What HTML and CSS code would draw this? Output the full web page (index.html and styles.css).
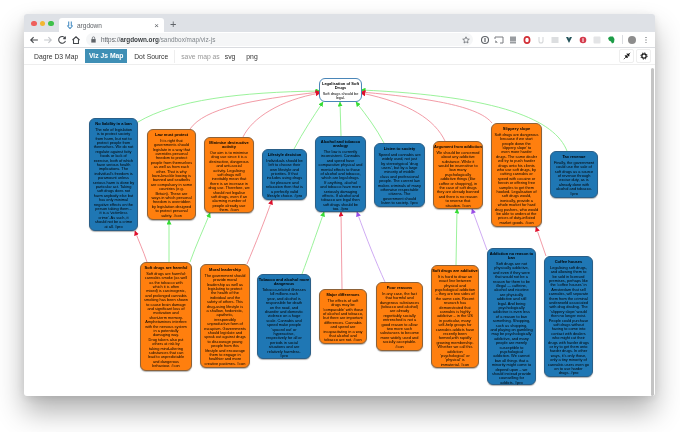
FILE: index.html
```html
<!DOCTYPE html>
<html lang="en">
<head>
  <meta charset="UTF-8" />
  <title>argdown</title>
  <link rel="stylesheet" href="styles.css">
</head>
<body>
  <div class="window">

    <!-- Tab strip -->
    <div class="tabstrip">
      <span class="light light-red"></span>
      <span class="light light-amber"></span>
      <span class="light light-green"></span>
      <div class="tab">
        <svg class="favicon" viewBox="0 0 8 8"><path d="M2.7 0.5V5M5.3 0.5V5M1.2 4.5L4 7.6L6.8 4.5" fill="none" stroke="#4a8fc4" stroke-width="1.1"/></svg>
        <span class="tab-title">argdown</span>
        <span class="tab-close">×</span>
      </div>
      <span class="tab-new">+</span>
    </div>

    <!-- Browser toolbar -->
    <div class="toolbar">
      <svg class="slot" viewBox="-2 -2 18 18"><path d="M12 7H3M6.5 3.2L2.8 7L6.5 10.8" fill="none" stroke="#44474b" stroke-width="1.4"/></svg>
      <svg class="slot" viewBox="-2 -2 18 18"><path d="M2 7H11M7.5 3.2L11.2 7L7.5 10.8" fill="none" stroke="#c4c7cb" stroke-width="1.4"/></svg>
      <svg class="slot" viewBox="-2 -2 18 18"><path d="M11 4.7A4.4 4.4 0 1 0 11.4 8M11.3 2.5V5.2H8.6" fill="none" stroke="#44474b" stroke-width="1.4"/></svg>
      <svg class="slot" viewBox="-2 -2 18 18"><path d="M2.5 7L7 2.8L11.5 7M3.8 6V11.5H10.2V6" fill="none" stroke="#44474b" stroke-width="1.4"/></svg>
      <div class="omnibox">
        <svg class="lock" viewBox="0 0 8 8"><rect x="1.5" y="3.5" width="5" height="4" fill="#5f6368"/><path d="M2.6 3.5V2.3A1.4 1.4 0 0 1 5.4 2.3V3.5" fill="none" stroke="#5f6368" stroke-width="0.8"/></svg>
        <span class="url"><span class="url-scheme">https://</span><span class="url-host">argdown.org</span><span class="url-path">/sandbox/map/viz-js</span></span>
        <svg class="star" viewBox="0 0 10 10"><path d="M5 1L6.2 3.7L9.1 4L6.9 5.9L7.5 8.8L5 7.3L2.5 8.8L3.1 5.9L0.9 4L3.8 3.7Z" fill="none" stroke="#5f6368" stroke-width="0.9"/></svg>
      </div>
      <svg class="slot" viewBox="0 0 14 14"><circle cx="7" cy="7" r="3.5" fill="none" stroke="#5f6368" stroke-width="1.1"/><path d="M7 5V9" stroke="#5f6368" stroke-width="1.2"/></svg>
      <svg class="slot" viewBox="0 0 14 14"><path d="M3 6V4H11V10H8M3 8A2 2 0 0 1 5 10M3 9.5H3.6" fill="none" stroke="#7a7d81" stroke-width="1"/></svg>
      <svg class="slot" viewBox="0 0 14 14"><rect x="4" y="3.5" width="6" height="7" fill="#9a9da1"/><path d="M4 8.5H10" stroke="#e4e5e7" stroke-width="0.6"/></svg>
      <svg class="slot" viewBox="0 0 14 14"><ellipse cx="7" cy="7" rx="2.6" ry="3.2" fill="none" stroke="#d22f36" stroke-width="1.7"/></svg>
      <svg class="slot" viewBox="0 0 14 14"><path d="M5 4V8A2 2 0 0 0 9 8V4" fill="none" stroke="#d6d8da" stroke-width="1.1"/></svg>
      <svg class="slot" viewBox="0 0 14 14"><rect x="3.5" y="4" width="7" height="6" fill="#dcdee0"/></svg>
      <svg class="slot" viewBox="0 0 14 14"><path d="M4 4H6.2L7 5.8L7.8 4H10L7 10Z" fill="#26555c"/></svg>
      <svg class="slot" viewBox="0 0 14 14"><circle cx="7" cy="7" r="3.3" fill="#d43a4c"/><path d="M7 5.2V9" stroke="#fff" stroke-width="1"/></svg>
      <svg class="slot" viewBox="0 0 14 14"><rect x="3.5" y="3.5" width="7" height="7" rx="1" fill="#e3e4e6"/></svg>
      <svg class="slot" viewBox="0 0 14 14"><path d="M4 5L6 3.5H9L10.5 6L10 9.5L8 10.5L7 8.5L5 7.5Z" fill="#1c9c47"/></svg>
      <span class="toolbar-sep"></span>
      <span class="avatar-slot"><span class="avatar"></span></span>
      <svg class="slot" viewBox="0 0 14 14"><path d="M7 4V4.9M7 6.6V7.5M7 9.2V10.1" stroke="#5f6368" stroke-width="1.1"/></svg>
    </div>

    <!-- App nav -->
    <nav class="appnav">
      <a class="nav-link">Dagre D3 Map</a>
      <a class="nav-link active">Viz Js Map</a>
      <a class="nav-link">Dot Source</a>
      <span class="nav-sep"></span>
      <span class="nav-label">save map as</span>
      <a class="nav-link nav-svg">svg</a>
      <a class="nav-link nav-png">png</a>
      <span class="nav-tools">
        <span class="tool-btn">
          <svg viewBox="0 0 10 10"><path d="M1 9L4 6M9 1L6 4M2.5 4.7H5.3V7.5ZM4.7 2.5H7.5V5.3Z" fill="#111" stroke="#111" stroke-width="0.9"/></svg>
        </span>
        <span class="tool-btn">
          <svg viewBox="0 0 10 10"><circle cx="5" cy="5" r="2.7" fill="none" stroke="#111" stroke-width="1.5"/><circle cx="5" cy="5" r="3.9" fill="none" stroke="#111" stroke-width="1.2" stroke-dasharray="1.5 1.56"/></svg>
        </span>
      </span>
    </nav>

    <!-- Map -->
    <div class="map">
      <svg class="edges" viewBox="24 65 631 332">
        <defs>
          <marker id="head-green" markerUnits="userSpaceOnUse" markerWidth="5" markerHeight="5" refX="4.5" refY="2.5" orient="auto"><path d="M0 0L5 2.5L0 5Z" fill="#35dd35"/></marker>
          <marker id="head-red" markerUnits="userSpaceOnUse" markerWidth="5" markerHeight="5" refX="4.5" refY="2.5" orient="auto"><path d="M0 0L5 2.5L0 5Z" fill="#e0102c"/></marker>
          <marker id="head-purple" markerUnits="userSpaceOnUse" markerWidth="5" markerHeight="5" refX="4.5" refY="2.5" orient="auto"><path d="M0 0L5 2.5L0 5Z" fill="#9a4de6"/></marker>
        </defs>
        <g class="edge-green" marker-end="url(#head-green)">
          <path d="M138 122C175 100 240 92 320 91"/>
          <path d="M294 149C303 132 313 117 323 102"/>
          <path d="M341 136L340 102"/>
          <path d="M384 143C376 128 367 116 356 102"/>
          <path d="M567 151C555 120 500 96 361 90"/>
          <path d="M169 262L169 220"/>
          <path d="M190 262C196 245 204 228 210 213"/>
          <path d="M302 274C308 258 316 235 324 212"/>
          <path d="M456 265L457 209"/>
        </g>
        <g class="edge-red" marker-end="url(#head-red)">
          <path d="M190 129C205 108 250 100 320 92"/>
          <path d="M243 137C252 118 280 100 320 93"/>
          <path d="M445 141C435 120 410 103 361 93"/>
          <path d="M492 123C480 108 440 99 361 92"/>
          <path d="M147 262C143 250 139 242 135 231"/>
          <path d="M247 264C255 245 265 220 272 200"/>
          <path d="M342 289L341 212"/>
          <path d="M546 256L536 227"/>
        </g>
        <g class="edge-purple" marker-end="url(#head-purple)">
          <path d="M385 282C376 262 367 240 357 212"/>
          <path d="M487 250L472 209"/>
        </g>
      </svg>

      <div class="node node-thesis n-top">
        <h4>Legalisation of Soft<br>Drugs</h4>
        <p>Soft drugs should be<br>legal.</p>
      </div>

      <div class="node pro n-harm">
        <h4>No liability in a ban</h4>
        <p>The role of legislation<br>is to protect society<br>from harm, but not to<br>protect people from<br>themselves. We do not<br>regulate against fatty<br>foods or lack of<br>exercise, both of which<br>have serious health<br>implications. The<br>individual's freedom is<br>paramount unless<br>serious harm is done by<br>particular act. Taking<br>soft drugs does not<br>harm anybody else but<br>has only minimal<br>negative effects on the<br>person taking them –<br>it is a 'victimless<br>crime'. As such, it<br>should not be a crime<br>at all. #pro</p>
      </div>
      <div class="node con n-law">
        <h4>Law must protect</h4>
        <p>It is right that<br>governments should<br>legislate in a way that<br>overrides personal<br>freedom to protect<br>people from themselves<br>as well as from each<br>other. That is why<br>bare-knuckle boxing is<br>banned and seatbelts<br>are compulsory in some<br>countries (e.g.<br>Britain). These are<br>ways in which personal<br>freedom is overridden<br>by legislation designed<br>to protect personal<br>safety. #con</p>
      </div>
      <div class="node con n-minimise">
        <h4>Minimise destructive<br>activity</h4>
        <p>Our aim is to minimise<br>drug use since it is a<br>destructive, dangerous<br>and anti-social<br>activity. Legalising<br>soft drugs will<br>inevitably mean that<br>there is an increase in<br>drug use. Therefore, we<br>should not legalise<br>soft drugs, even if an<br>alarming number of<br>people already use<br>them. #con</p>
      </div>
      <div class="node pro n-lifestyle">
        <h4>Lifestyle decision</h4>
        <p>Individuals should be<br>left to choose their<br>own lifestyle and<br>priorities. If that<br>includes using drugs<br>for pleasure and<br>relaxation then that is<br>a perfectly valid<br>lifestyle choice. #pro</p>
      </div>
      <div class="node pro n-alcohol">
        <h4>Alcohol and tobacco<br>analogy</h4>
        <p>The law is currently<br>inconsistent. Cannabis<br>and speed have<br>comparative physical and<br>mental effects to those<br>of alcohol and tobacco,<br>which are legal drugs.<br>If anything, alcohol<br>and tobacco have more<br>seriously damaging<br>effects. If alcohol and<br>tobacco are legal then<br>soft drugs should be<br>too. #pro</p>
      </div>
      <div class="node pro n-listen">
        <h4>Listen to society</h4>
        <p>Speed and cannabis are<br>widely used, not just<br>by stereotypical 'drug<br>users', but by a large<br>minority of middle<br>class and professional<br>people. The current law<br>makes criminals of many<br>otherwise respectable<br>citizens. The<br>government should<br>listen to society. #pro</p>
      </div>
      <div class="node con n-argument">
        <h4>Argument from addiction</h4>
        <p>We should be concerned<br>about any addictive<br>substance. While it<br>would be insensitive to<br>ban many<br>psychologically<br>addictive things (like<br>coffee or shopping), in<br>the case of soft drugs<br>they are already banned<br>and there is no reason<br>to reverse that<br>situation. #con</p>
      </div>
      <div class="node con n-slippery">
        <h4>Slippery slope</h4>
        <p>Soft drugs are dangerous<br>because if we start<br>people down the<br>'slippery slope' to<br>even more harder<br>drugs. The same dealer<br>will try to push harder<br>drugs onto his clients<br>who use soft drugs, by<br>cutting cannabis or<br>speed with cocaine or<br>heroin or offering free<br>samples to get them<br>hooked. Legalisation of<br>soft drugs would,<br>ironically, provide a<br>whole market for hard<br>drug pushers, who would<br>be able to undercut the<br>prices of duty-inflated<br>market goods. #con</p>
      </div>
      <div class="node pro n-tax">
        <h4>Tax revenue</h4>
        <p>Finally, the government<br>could use the sale of<br>soft drugs as a source<br>of revenue through<br>excise duty, as is<br>already done with<br>alcohol and tobacco.<br>#pro</p>
      </div>

      <div class="node con n-harmful">
        <h4>Soft drugs are harmful</h4>
        <p>Soft drugs are harmful:<br>cannabis smoke (as well<br>as the tobacco with<br>which it is often<br>mixed) is carcinogenic,<br>and prolonged cannabis<br>smoking has been shown<br>to cause brain damage<br>and significant loss of<br>motivation and<br>short-term memory.<br>Amphetamines interfere<br>with the nervous system<br>in a potentially<br>damaging way.<br>Drug takers also put<br>others at risk by<br>taking mind-altering<br>substances that can<br>lead to unpredictable<br>and dangerous<br>behaviour. #con</p>
      </div>
      <div class="node con n-moral">
        <h4>Moral leadership</h4>
        <p>The government should<br>provide moral<br>leadership as well as<br>legislating to protect<br>the health of the<br>individual and the<br>safety of others. This<br>drug-using lifestyle is<br>a shallow, hedonistic,<br>apathetic,<br>irresponsibly<br>unproductive form of<br>escapism. Governments<br>should legislate and<br>speak out against drugs<br>to discourage young<br>people from this<br>lifestyle and encourage<br>them to engage in<br>healthier and more<br>creative pastimes. #con</p>
      </div>
      <div class="node pro n-tobacco">
        <h4>Tobacco and alcohol more<br>dangerous</h4>
        <p>Tobacco-related illnesses<br>kill millions each<br>year, and alcohol is<br>responsible for death<br>on the road, and<br>disorder and domestic<br>violence on a huge<br>scale. Cannabis and<br>speed make people<br>'spaced out' or<br>hyperactive,<br>respectively for all or<br>periods in social<br>situations and are<br>relatively harmless.<br>#pro</p>
      </div>
      <div class="node con n-major">
        <h4>Major differences</h4>
        <p>The effects of soft<br>drugs may be<br>'comparable' with those<br>of alcohol and tobacco,<br>but there are important<br>differences. Cannabis<br>and speed are<br>incapacitating in a way<br>that alcohol and<br>tobacco are not. #con</p>
      </div>
      <div class="node con n-poor">
        <h4>Poor reasons</h4>
        <p>In any case, the fact<br>that harmful and<br>dangerous substances<br>(tobacco and alcohol)<br>are already<br>regrettably socially<br>entrenched is not a<br>good reason to allow<br>two more such<br>substances to become<br>more widely used and<br>socially acceptable.<br>#con</p>
      </div>
      <div class="node con n-addictive">
        <h4>Soft drugs are addictive</h4>
        <p>It is hard to draw an<br>exact line between<br>physical and<br>psychological addiction<br>– they are two sides of<br>the same coin. Recent<br>research has<br>demonstrated that<br>cannabis is highly<br>addictive – in the US<br>in particular, many<br>self-help groups for<br>cannabis addicts have<br>recently been<br>formed,with rapidly<br>growing membership.<br>Whether we call this<br>addiction<br>'psychological' or<br>'physical' is<br>immaterial. #con</p>
      </div>
      <div class="node pro n-noban">
        <h4>Addiction no reason to<br>ban</h4>
        <p>Soft drugs are not<br>physically addictive,<br>and even if they were<br>that would not be a<br>reason for them to be<br>illegal — caffeine,<br>alcohol and nicotine<br>are physically<br>addictive and still<br>legal. And being<br>psychologically<br>addictive is even less<br>of a reason to ban<br>something. Shopping,<br>such as shopping,<br>and playing on gambling<br>may be psychologically<br>addictive, and many<br>people are merely<br>susceptible to<br>psychological<br>addiction. We cannot<br>ban all things that a<br>minority might come to<br>depend upon – we<br>should instead provide<br>counselling for<br>addicts. #pro</p>
      </div>
      <div class="node pro n-coffee">
        <h4>Coffee houses</h4>
        <p>Legalising soft drugs,<br>and allowing them to<br>be sold in licensed<br>premises, perhaps like<br>the 'coffee houses' in<br>Amsterdam that sell<br>cannabis, will separate<br>them from the criminal<br>underworld associated<br>with drug dealing. The<br>'slippery slope' would<br>then no longer exist.<br>People could purchase<br>soft drugs without<br>having to come into<br>contact with dealers<br>who might cut their<br>drugs with harder drugs<br>or try to get them onto<br>harder drugs. In other<br>ways, it's only those,<br>only a tiny minority of<br>cannabis users even go<br>on to use harder<br>drugs. #pro</p>
      </div>

      <span class="scrollbar"></span>
    </div>
  </div>
</body>
</html>
```

FILE: styles.css
```css
html, body {
  margin: 0;
  padding: 0;
  background-color: #fff;
  overflow: hidden;
  font-family: 'Liberation Sans', Arial, sans-serif;
}
body {
  height: 432px;
  padding: 14px 25px 0 24px;
  box-sizing: border-box;
}
/* the reference is a scaled-down photo, a touch of blur keeps the tiny text alike */
.window {
  height: 382px;
  display: flex;
  flex-direction: column;
  background: #fff;
  border-radius: 3px;
  box-shadow: 0 16px 28px rgba(0,0,0,0.3), 0 2px 10px rgba(0,0,0,0.1);
  overflow: hidden;
  filter: blur(0.35px);
}

/* Tab strip */
.tabstrip {
  height: 18px;
  flex: none;
  display: flex;
  align-items: flex-end;
  background: #dee1e6;
  padding-left: 7px;
  box-sizing: border-box;
}
.light {
  width: 5.5px;
  height: 5.5px;
  border-radius: 50%;
  margin: 0 3px 6px 0;
}
.light-red { background: #ee5f5b; }
.light-amber { background: #f2b632; }
.light-green { background: #3fc14a; }
.tab {
  width: 105px;
  height: 14px;
  margin-left: 2.5px;
  background: #fff;
  border-radius: 3px 3px 0 0;
  display: flex;
  align-items: center;
  padding: 0 5px 0 7px;
  box-sizing: border-box;
}
.favicon { width: 8px; height: 8px; }
.tab-title {
  font-size: 6.5px;
  color: #5f6368;
  margin-left: 3px;
}
.tab-close {
  margin-left: auto;
  font-size: 8px;
  color: #5f6368;
}
.tab-new {
  margin: 0 0 1px 6px;
  font-size: 11px;
  line-height: 14px;
  color: #5f6368;
}

/* Toolbar */
.toolbar {
  height: 16px;
  flex: none;
  display: flex;
  align-items: center;
  padding-left: 3px;
  border-bottom: 1px solid #dadce0;
  box-sizing: border-box;
}
.slot {
  width: 14px;
  height: 14px;
  flex: none;
}
.omnibox {
  width: 387px;
  height: 13px;
  flex: none;
  margin: 0 5px 0 3px;
  background: #f5f6f7;
  border-radius: 7px;
  display: flex;
  align-items: center;
  padding: 0 3px 0 4px;
  box-sizing: border-box;
}
.lock { width: 7px; height: 7px; }
.url {
  font-size: 6.4px;
  margin-left: 4px;
  color: #80868b;
}
.url-scheme { color: #5f6368; }
.url-host { color: #3c4043; font-weight: bold; }
.star {
  width: 8px;
  height: 8px;
  margin-left: auto;
}
.toolbar-sep {
  width: 1px;
  height: 9px;
  margin: 0 2px 0 4px;
  background: #dadce0;
}
.avatar-slot {
  width: 14px;
  display: flex;
  justify-content: center;
}
.avatar {
  width: 8px;
  height: 8px;
  border-radius: 50%;
  background: #8d8d8d;
}

/* App nav */
.appnav {
  height: 17px;
  flex: none;
  display: flex;
  align-items: center;
  padding: 0 4px 0 10px;
  border-bottom: 1px solid #eee;
  box-sizing: border-box;
  font-size: 6.8px;
  color: #333;
}
.nav-link { margin-right: 7px; }
.nav-link.active {
  height: 14px;
  line-height: 14px;
  width: 42px;
  text-align: center;
  background: #3f8fb5;
  color: #fff;
  font-weight: bold;
}
.nav-sep {
  width: 1px;
  height: 13px;
  background: #eee;
  margin: 0 6px 0 -1px;
}
.nav-label {
  color: #999;
  margin-right: 5px;
}
.nav-svg { margin-right: 11px; }
.nav-tools {
  margin-left: auto;
  display: flex;
  gap: 2px;
}
.tool-btn {
  width: 15px;
  height: 14px;
  border: 1px solid #eee;
  border-radius: 2px;
  box-sizing: border-box;
  display: flex;
  align-items: center;
  justify-content: center;
}
.tool-btn svg { width: 8px; height: 8px; }

/* Map */
.map {
  position: relative;
  flex: 1;
  overflow: hidden;
}
.edges {
  position: absolute;
  left: 0;
  top: 0;
  width: 631px;
  height: 332px;
}
.edges g path { fill: none; stroke-width: 0.9; }
.edge-green path { stroke: #90f090; }
.edge-red path { stroke: #f0909c; }
.edge-purple path { stroke: #c9a2f2; }

.scrollbar {
  position: absolute;
  right: 1px;
  top: 3px;
  bottom: 0;
  width: 3px;
  background: #c4c4c4;
  border-radius: 2px;
}

.node {
  position: absolute;
  box-sizing: border-box;
  padding-top: 2.5px;
  border: 1px solid;
  border-radius: 6px;
  box-shadow: 0 1px 1px rgba(0,0,0,0.3);
  text-align: center;
  color: #000;
  font-size: 3.9px;
  line-height: 4.4px;
  white-space: nowrap;
}
.node h4 {
  margin: 0 0 2px;
  font-size: 4px;
  line-height: 4.2px;
  font-weight: bold;
}
.node p { margin: 0; }
.pro {
  background: #1f77b4;
  border-color: #2a5f88;
}
.con {
  background: #ff7f0e;
  border-color: #8d6238;
}
.node-thesis {
  background: #fff;
  border-color: #4a86b8;
  box-shadow: none;
}

.n-top { left: 295px; top: 13px; width: 43px; height: 24px; }
.n-harm { left: 65px; top: 53px; width: 49px; height: 113px; }
.n-law { left: 123px; top: 64px; width: 49px; height: 91px; }
.n-minimise { left: 180px; top: 72px; width: 50px; height: 76px; }
.n-lifestyle { left: 238px; top: 84px; width: 45px; height: 51px; }
.n-alcohol { left: 291px; top: 71px; width: 51px; height: 76px; }
.n-listen { left: 350px; top: 78px; width: 51px; height: 64px; }
.n-argument { left: 409px; top: 76px; width: 50px; height: 68px; }
.n-slippery { left: 467px; top: 58px; width: 51px; height: 104px; }
.n-tax { left: 526px; top: 86px; width: 48px; height: 47px; }
.n-harmful { left: 116px; top: 197px; width: 52px; height: 109px; }
.n-moral { left: 176px; top: 199px; width: 50px; height: 104px; }
.n-tobacco { left: 233px; top: 209px; width: 54px; height: 85px; }
.n-major { left: 295px; top: 224px; width: 48px; height: 55px; }
.n-poor { left: 352px; top: 217px; width: 47px; height: 69px; }
.n-addictive { left: 407px; top: 200px; width: 48px; height: 103px; }
.n-noban { left: 463px; top: 183px; width: 49px; height: 137px; }
.n-coffee { left: 520px; top: 191px; width: 49px; height: 121px; }
```
